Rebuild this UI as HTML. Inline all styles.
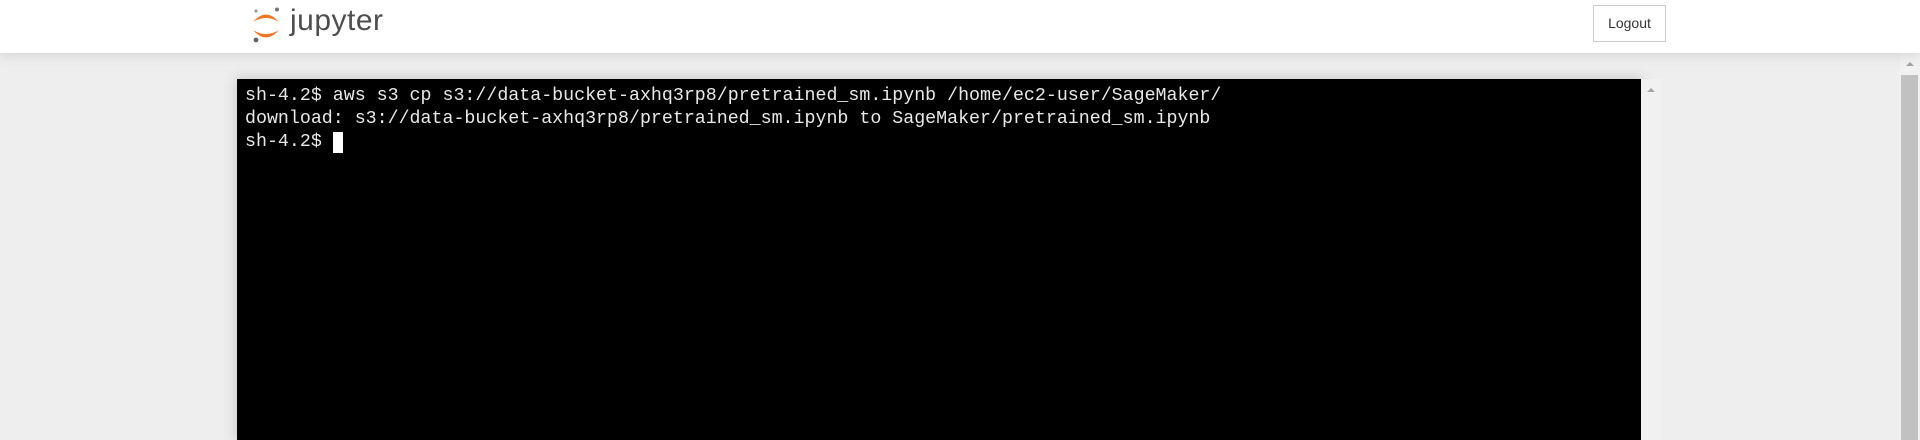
<!DOCTYPE html>
<html><head><style>
body{margin:0;width:1920px;height:440px;background:#eeeeee;overflow:hidden;position:relative;font-family:"Liberation Sans",sans-serif}
#hdr{position:absolute;left:0;top:0;width:1920px;height:53px;background:#fff;box-shadow:0 0 12px 1px rgba(87,87,87,.2);z-index:2}
#logo{position:absolute;left:252px;top:6px}
#jt{position:absolute;left:290px;top:4px;font-size:30px;color:#4e4e4e;letter-spacing:0.5px}
#logout{position:absolute;left:1593px;top:5px;border:1px solid #ccc;box-sizing:border-box;width:73px;height:37px;font-size:14px;color:#333;text-align:center;line-height:35px}
#term{position:absolute;left:237px;top:79px;width:1404px;height:361px;background:#000;box-shadow:0 0 12px 1px rgba(87,87,87,.25)}
#tsb{position:absolute;left:1641px;top:79px;width:21px;height:361px;background:#f1f1f1}
pre{margin:0;position:absolute;left:8px;top:6px;font-family:"Liberation Mono",monospace;font-size:18.3px;line-height:23px;color:#e8e8e8}
#cur{position:absolute;left:333px;top:132px;width:10px;height:21px;background:#fff}
#psb{position:absolute;left:1900px;top:53px;width:20px;height:387px;background:#f1f1f1}
#thumb{position:absolute;left:1901px;top:75px;width:17px;height:365px;background:#c1c1c1}
.arr{position:absolute;width:0;height:0;border-left:4px solid transparent;border-right:4px solid transparent;border-bottom:4px solid #a3a3a3}
</style></head><body>
<div id="hdr">
<svg id="logo" width="32" height="38" viewBox="0 0 32 38">
<circle cx="25" cy="3.5" r="2" fill="#767677"/>
<circle cx="4" cy="5" r="1.6" fill="#9e9e9e"/>
<circle cx="4" cy="34" r="2.4" fill="#616262"/>
<path d="M1 16 Q14 1 27 16 Q14 8 1 16Z" fill="#f37726"/>
<path d="M1 24 Q14 39 27 24 Q14 32 1 24Z" fill="#f37726"/>
</svg>
<div id="jt">jupyter</div>
<div id="logout">Logout</div>
</div>
<div id="term"><pre>sh-4.2$ aws s3 cp s3://data-bucket-axhq3rp8/pretrained_sm.ipynb /home/ec2-user/SageMaker/
download: s3://data-bucket-axhq3rp8/pretrained_sm.ipynb to SageMaker/pretrained_sm.ipynb
sh-4.2$ </pre></div>
<div id="cur"></div>
<div id="tsb"><div class="arr" style="left:6px;top:9px"></div></div>
<div id="psb"><div class="arr" style="left:6px;top:9px"></div></div>
<div id="thumb"></div>
</body></html>
